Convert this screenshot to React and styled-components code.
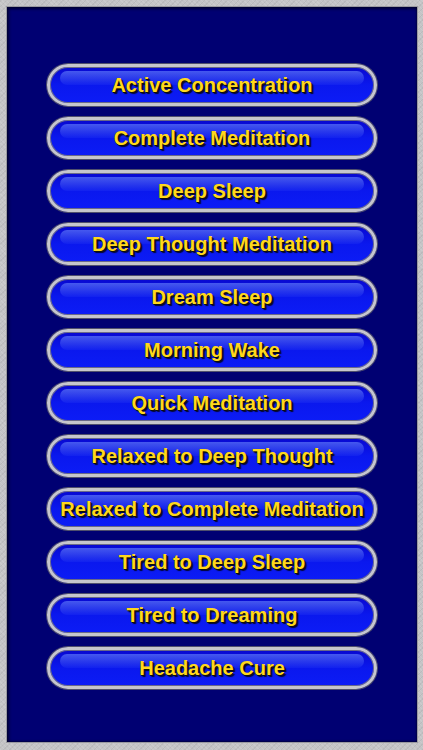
import styled, { createGlobalStyle } from "styled-components"

const GlobalStyle = createGlobalStyle`
    html, body {
        margin: 0;
        padding: 0;
    }
    body {
        width: 423px;
        height: 750px;
        overflow: hidden;
        background: #c4c4c6;
        font-family: "Liberation Sans", Arial, sans-serif;
    }
`

const Frame = styled.div`
    box-sizing: border-box;
    width: 423px;
    height: 750px;
    padding: 7px 6px 8px 7px;
    background:
        repeating-linear-gradient(45deg, rgba(255,255,255,0.1) 0 1px, transparent 1px 3px),
        repeating-linear-gradient(-45deg, rgba(0,0,0,0.05) 0 1px, transparent 1px 4px),
        #c4c4c6;
`

const Panel = styled.div`
    box-sizing: border-box;
    height: 100%;
    background: #000072;
    box-shadow:
        inset 2px 2px 3px rgba(0, 0, 0, 0.55),
        inset -1px -1px 2px rgba(0, 0, 0, 0.4),
        0 0 0 1px #9a9aa0;
    display: flex;
    flex-direction: column;
    align-items: center;
    padding-top: 57px;
    gap: 11px;
`

const Pill = styled.button`
    position: relative;
    box-sizing: border-box;
    width: 330px;
    height: 42px;
    border-radius: 21px;
    border: 3px solid #c6c6cc;
    padding: 0;
    background: linear-gradient(#0808d0, #0a18ee 50%, #0c1cf6);
    box-shadow:
        inset 0 0 0 1px #6a6a88,
        0 0 0 1px #50506c;
    display: flex;
    align-items: center;
    justify-content: center;
    cursor: pointer;
    overflow: hidden;

    &::before {
        content: "";
        position: absolute;
        left: 10px;
        right: 10px;
        top: 4px;
        height: 14px;
        border-radius: 7px;
        background: linear-gradient(rgba(110, 140, 255, 0.6), rgba(80, 110, 255, 0.1));
    }
`

const Label = styled.span`
    position: relative;
    font-family: "Liberation Sans", Arial, sans-serif;
    font-weight: 700;
    font-size: 20px;
    color: #ffd81c;
    text-shadow: 1px 1px 0 #101008, 2px 2px 1px rgba(0, 0, 0, 0.8);
    white-space: nowrap;
    margin-top: 1px;
`

const programs = [
    "Active Concentration",
    "Complete Meditation",
    "Deep Sleep",
    "Deep Thought Meditation",
    "Dream Sleep",
    "Morning Wake",
    "Quick Meditation",
    "Relaxed to Deep Thought",
    "Relaxed to Complete Meditation",
    "Tired to Deep Sleep",
    "Tired to Dreaming",
    "Headache Cure",
]

const App = () => {
  return (
    <>
      <GlobalStyle />
      <Frame>
        <Panel>
          {programs.map(name => (
            <Pill key={name}>
              <Label>{name}</Label>
            </Pill>
          ))}
        </Panel>
      </Frame>
    </>
  )
}

export default App
